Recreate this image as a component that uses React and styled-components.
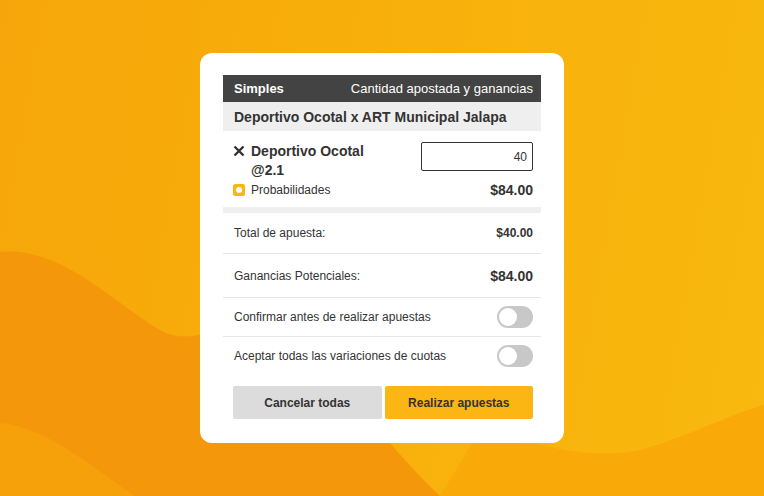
import React from "react";
import styled, { createGlobalStyle } from "styled-components";

const GlobalStyle = createGlobalStyle`
  html, body {
    margin: 0;
    padding: 0;
  }
  body {
    font-family: "Liberation Sans", Arial, sans-serif;
    background: linear-gradient(100deg, #f6a60a 0%, #f8b20b 60%, #f9b90e 100%);
    color: #333;
  }
`;

const Page = styled.div`
  position: relative;
  width: 764px;
  height: 496px;
  overflow: hidden;
  display: flex;
  align-items: flex-start;
  justify-content: center;
  padding-top: 53px;
  box-sizing: border-box;
`;

const Waves = styled.svg`
  position: absolute;
  inset: 0;
  z-index: 0;
`;

const Card = styled.div`
  position: relative;
  z-index: 1;
  width: 364px;
  background: #fff;
  border-radius: 12px;
  padding: 22px 23px 24px;
  box-sizing: border-box;
`;

const HeaderBar = styled.div`
  display: flex;
  justify-content: space-between;
  align-items: center;
  height: 27px;
  padding: 0 8px 0 11px;
  background: #434343;
  color: #fff;
  font-size: 13px;
`;

const HeaderTitle = styled.span`
  font-weight: 700;
`;

const MatchBar = styled.div`
  height: 29px;
  display: flex;
  align-items: center;
  padding: 0 11px;
  background: #efefef;
  font-size: 14px;
  font-weight: 700;
  color: #333;
`;

const BetRow = styled.div`
  display: grid;
  grid-template-columns: 1fr 112px;
  padding: 11px 8px 9px 10px;
  border-bottom: 6px solid #efefef;
`;

const Selection = styled.div`
  display: flex;
  gap: 6px;
  font-size: 14px;
  font-weight: 700;
  line-height: 19px;
`;

const CloseIcon = styled.svg`
  flex: none;
  margin-top: 3px;
`;

const StakeInput = styled.div`
  height: 29px;
  box-sizing: border-box;
  border: 1px solid #333;
  border-radius: 2px;
  display: flex;
  align-items: center;
  justify-content: flex-end;
  padding-right: 5px;
  font-size: 12px;
  color: #333;
`;

const OddsLabel = styled.div`
  display: flex;
  align-items: center;
  gap: 6px;
  font-size: 12px;
  margin-top: 2px;
`;

const OddsDot = styled.span`
  width: 12px;
  height: 12px;
  border-radius: 2px;
  background: #fbb614;
  display: flex;
  align-items: center;
  justify-content: center;
  &::after {
    content: "";
    width: 6px;
    height: 6px;
    border-radius: 50%;
    background: #fff;
  }
`;

const OddsValue = styled.div`
  text-align: right;
  font-size: 14px;
  font-weight: 700;
  margin-top: 2px;
  align-self: center;
`;

const SummaryRow = styled.div`
  display: flex;
  justify-content: space-between;
  align-items: center;
  height: ${(p) => p.h}px;
  padding: 0 8px 0 11px;
  font-size: 12px;
  border-bottom: ${(p) => (p.last ? "none" : "1px solid #e3e7ec")};
  box-sizing: border-box;
`;

const Amount = styled.span`
  font-weight: 700;
  font-size: ${(p) => (p.big ? 14 : 12)}px;
`;

const Toggle = styled.span`
  width: 36px;
  height: 22px;
  border-radius: 11px;
  background: #c8c8c8;
  display: flex;
  align-items: center;
  padding-left: 2px;
  box-sizing: border-box;
  &::after {
    content: "";
    width: 18px;
    height: 18px;
    border-radius: 50%;
    background: #fff;
  }
`;

const Actions = styled.div`
  display: grid;
  grid-template-columns: 1fr 1fr;
  gap: 3px;
  margin: 11px 8px 0 10px;
`;

const ActionButton = styled.button`
  height: 33px;
  border: none;
  border-radius: 2px;
  font-family: inherit;
  font-size: 12px;
  font-weight: 700;
  color: #333;
  background: ${(p) => (p.primary ? "#fbb614" : "#dcdcdc")};
`;

export default function App() {
  return (
    <Page>
      <GlobalStyle />
      <Waves width="764" height="496" viewBox="0 0 764 496">
        <path
          d="M0,252 C60,246 110,300 160,330 C190,346 215,330 260,310 C330,360 380,440 440,496 L0,496 Z"
          fill="#f5970a"
        />
        <path
          d="M0,423 C50,428 95,470 135,496 L0,496 Z"
          fill="#f6a10a"
        />
        <path
          d="M480,430 C530,440 580,462 640,450 C690,436 730,414 764,405 L764,496 L440,496 Z"
          fill="#f9aa09"
        />
      </Waves>
      <Card>
        <HeaderBar>
          <HeaderTitle>Simples</HeaderTitle>
          <span>Cantidad apostada y ganancias</span>
        </HeaderBar>
        <MatchBar>Deportivo Ocotal x ART Municipal Jalapa</MatchBar>
        <BetRow>
          <Selection>
            <CloseIcon width="12" height="12" viewBox="0 0 12 12">
              <path d="M1.5 1.5 L10.5 10.5 M10.5 1.5 L1.5 10.5" stroke="#333" strokeWidth="2.4" />
            </CloseIcon>
            <span>
              Deportivo Ocotal
              <br />
              @2.1
            </span>
          </Selection>
          <StakeInput>40</StakeInput>
          <OddsLabel>
            <OddsDot />
            Probabilidades
          </OddsLabel>
          <OddsValue>$84.00</OddsValue>
        </BetRow>
        <SummaryRow h={41}>
          <span>Total de apuesta:</span>
          <Amount>$40.00</Amount>
        </SummaryRow>
        <SummaryRow h={44}>
          <span>Ganancias Potenciales:</span>
          <Amount big>$84.00</Amount>
        </SummaryRow>
        <SummaryRow h={39}>
          <span>Confirmar antes de realizar apuestas</span>
          <Toggle />
        </SummaryRow>
        <SummaryRow h={38} last>
          <span>Aceptar todas las variaciones de cuotas</span>
          <Toggle />
        </SummaryRow>
        <Actions>
          <ActionButton>Cancelar todas</ActionButton>
          <ActionButton primary>Realizar apuestas</ActionButton>
        </Actions>
      </Card>
    </Page>
  );
}
